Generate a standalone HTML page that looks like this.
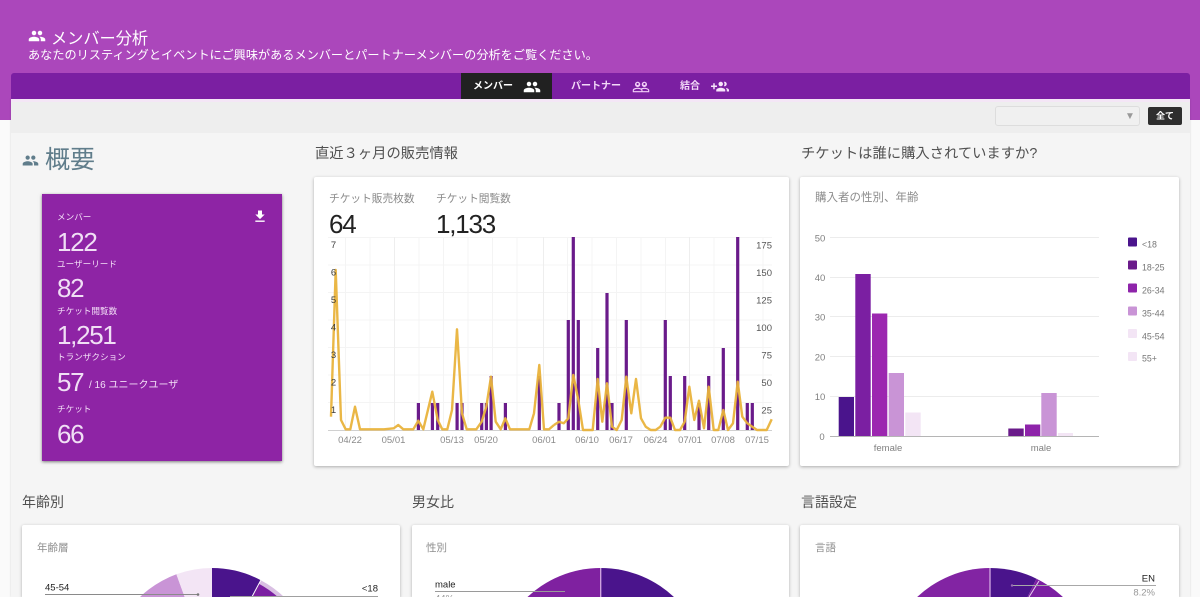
<!DOCTYPE html>
<html lang="ja"><head><meta charset="utf-8"><title>メンバー分析</title>
<style>
html,body{margin:0;padding:0;width:1200px;height:597px;overflow:hidden}
body{background:#fafafa;font-family:"Liberation Sans","Noto Sans CJK JP",sans-serif}
#w{position:relative;width:1200px;height:597px;overflow:hidden}
.a{position:absolute;white-space:nowrap;line-height:1}
.box{position:absolute;background:#fff;box-shadow:0 1px 3px rgba(0,0,0,.3);border-radius:2px}
.h{font-size:14.3px;color:#505050}
.ct{font-size:11.5px;color:#8d8d8d}
.l{font-size:8.6px;color:#f3dff7}
.n{font-size:26px;letter-spacing:-1.3px;color:#f0dff5}
svg{position:absolute;overflow:hidden}
</style></head><body><div id="w">
<div class="a" style="left:0;top:0;width:1200px;height:120px;background:#ab47bb"></div>
<div class="a" style="left:11px;top:99px;width:1179px;height:498px;background:#f5f5f5;box-shadow:0 0 2px rgba(0,0,0,.15)"></div>
<div class="a" style="left:11px;top:99px;width:1179px;height:34px;background:#eeeeee;border-top:3px solid #f4e6f6;box-sizing:border-box"></div>
<div class="a" style="left:11px;top:73px;width:1179px;height:26px;background:#7b1fa2;border-radius:3px 3px 0 0"></div>
<div class="a" style="left:461px;top:73px;width:91px;height:26px;background:#212121"></div>

<svg style="left:28px;top:27px" width="18" height="18" viewBox="0 0 24 24" fill="#fff"><path d="M16 11c1.66 0 2.99-1.34 2.99-3S17.66 5 16 5c-1.66 0-3 1.34-3 3s1.34 3 3 3zm-8 0c1.66 0 2.99-1.34 2.99-3S9.66 5 8 5C6.34 5 5 6.34 5 8s1.34 3 3 3zm0 2c-2.33 0-7 1.17-7 3.5V19h14v-2.5c0-2.33-4.67-3.5-7-3.5zm8 0c-.29 0-.62.02-.97.05 1.16.84 1.97 1.97 1.97 3.45V19h6v-2.5c0-2.33-4.67-3.5-7-3.5z"/></svg>
<div class="a" style="left:51px;top:31px;font-size:16.2px;color:#fff">メンバー分析</div>
<div class="a" style="left:28px;top:49px;font-size:12.16px;color:#fff">あなたのリスティングとイベントにご興味があるメンバーとパートナーメンバーの分析をご覧ください。</div>

<div class="a" style="left:473px;top:82px;font-size:10px;font-weight:bold;color:#fff">メンバー</div>
<svg style="left:523px;top:78px" width="18" height="18" viewBox="0 0 24 24" fill="#fff"><path d="M16 11c1.66 0 2.99-1.34 2.99-3S17.66 5 16 5c-1.66 0-3 1.34-3 3s1.34 3 3 3zm-8 0c1.66 0 2.99-1.34 2.99-3S9.66 5 8 5C6.34 5 5 6.34 5 8s1.34 3 3 3zm0 2c-2.33 0-7 1.17-7 3.5V19h14v-2.5c0-2.33-4.67-3.5-7-3.5zm8 0c-.29 0-.62.02-.97.05 1.16.84 1.97 1.97 1.97 3.45V19h6v-2.5c0-2.33-4.67-3.5-7-3.5z"/></svg>
<div class="a" style="left:571px;top:82px;font-size:10px;font-weight:bold;color:#f3d9f8">パートナー</div>
<svg style="left:632px;top:78px" width="18" height="18" viewBox="0 0 24 24" fill="#f3d0f8"><path d="M16.5 13c-1.2 0-3.07.34-4.5 1-1.43-.67-3.3-1-4.5-1C5.33 13 1 14.08 1 16.25V19h22v-2.75c0-2.17-4.33-3.25-6.5-3.25zm-4 4.5h-10v-1.25c0-.54 2.56-1.75 5-1.75s5 1.21 5 1.75v1.25zm9 0H14v-1.25c0-.46-.2-.86-.52-1.22.88-.3 1.96-.53 3.02-.53 2.44 0 5 1.21 5 1.75v1.25zM7.5 12c1.93 0 3.5-1.57 3.5-3.5S9.43 5 7.5 5 4 6.57 4 8.5 5.57 12 7.5 12zm0-5.5c.83 0 1.5.67 1.5 1.5s-.67 1.5-1.5 1.5S6 8.83 6 8s.67-1.5 1.5-1.5zm9 5.5c1.93 0 3.5-1.57 3.5-3.5S18.43 5 16.5 5 13 6.57 13 8.5s1.57 3.5 3.5 3.5zm0-5.5c.83 0 1.5.67 1.5 1.5s-.67 1.5-1.5 1.5S15 8.83 15 8s.67-1.5 1.5-1.5z"/></svg>
<div class="a" style="left:680px;top:82px;font-size:10px;font-weight:bold;color:#f3d9f8">結合</div>
<svg style="left:711px;top:78px" width="18" height="18" viewBox="0 0 24 24" fill="#f6e3fa"><path d="M8 10H5V7H3v3H0v2h3v3h2v-3h3v-2zm10 1c1.66 0 2.99-1.34 2.99-3S19.66 5 18 5c-.32 0-.63.05-.91.14.57.81.9 1.79.9 2.86s-.34 2.04-.9 2.86c.28.09.59.14.91.14zm-5 0c1.66 0 2.99-1.34 2.99-3S14.66 5 13 5c-1.66 0-3 1.34-3 3s1.34 3 3 3zm6.62 2.16c.83.73 1.38 1.66 1.38 2.84v2h3v-2c0-1.54-2.37-2.49-4.38-2.84zM13 13c-2 0-6 1-6 3v2h12v-2c0-2-4-3-6-3z"/></svg>

<div class="a" style="left:995px;top:106px;width:145px;height:20px;box-sizing:border-box;background:#f0f0f0;border:1px solid #ddd;border-radius:3px"></div>
<div class="a" style="left:1125px;top:111px;font-size:10px;line-height:11px;color:#999">▼</div>
<div class="a" style="left:1148px;top:107px;width:34px;height:18px;background:#2e2e2e;border-radius:2px;color:#fff;font-size:9px;font-weight:bold;text-align:center;line-height:18px">全て</div>

<svg style="left:22px;top:152px" width="17" height="17" viewBox="0 0 24 24" fill="#607d8b"><path d="M16 11c1.66 0 2.99-1.34 2.99-3S17.66 5 16 5c-1.66 0-3 1.34-3 3s1.34 3 3 3zm-8 0c1.66 0 2.99-1.34 2.99-3S9.66 5 8 5C6.34 5 5 6.34 5 8s1.34 3 3 3zm0 2c-2.33 0-7 1.17-7 3.5V19h14v-2.5c0-2.33-4.67-3.5-7-3.5zm8 0c-.29 0-.62.02-.97.05 1.16.84 1.97 1.97 1.97 3.45V19h6v-2.5c0-2.33-4.67-3.5-7-3.5z"/></svg>
<div class="a" style="left:45px;top:148px;font-size:25px;color:#607d8b">概要</div>

<div class="a" style="left:42px;top:194px;width:240px;height:267px;background:#8e24a5;box-shadow:0 1px 3px rgba(0,0,0,.5)"></div>
<svg style="left:252px;top:208px" width="16" height="17" viewBox="0 0 24 24" fill="#fff"><path d="M19 9h-4V3H9v6H5l7 7 7-7zM5 18v2h14v-2H5z"/></svg>
<div class="a l" style="left:57px;top:213px">メンバー</div>
<div class="a n" style="left:57px;top:229px">122</div>
<div class="a l" style="left:57px;top:260px">ユーザーリード</div>
<div class="a n" style="left:57px;top:275px">82</div>
<div class="a l" style="left:57px;top:307px">チケット閲覧数</div>
<div class="a n" style="left:57px;top:322px">1,251</div>
<div class="a l" style="left:57px;top:353px">トランザクション</div>
<div class="a n" style="left:57px;top:369px">57</div>
<div class="a" style="left:89px;top:381px;font-size:10px;color:#f3dff7">/ 16 ユニークユーザ</div>
<div class="a l" style="left:57px;top:405px">チケット</div>
<div class="a n" style="left:57px;top:421px">66</div>

<div class="a h" style="left:315px;top:147px">直近３ヶ月の販売情報</div>
<div class="a h" style="left:801px;top:147px">チケットは誰に購入されていますか?</div>
<div class="box" style="left:314px;top:177px;width:475px;height:289px"></div>
<div class="box" style="left:800px;top:177px;width:379px;height:289px"></div>
<div class="a" style="left:329px;top:194px;font-size:10.7px;color:#8a8a8a">チケット販売枚数</div>
<div class="a" style="left:436px;top:194px;font-size:10.7px;color:#8a8a8a">チケット閲覧数</div>
<div class="a" style="left:329px;top:211px;font-size:26px;letter-spacing:-1.2px;color:#222">64</div>
<div class="a" style="left:436px;top:211px;font-size:26px;letter-spacing:-1.2px;color:#222">1,133</div>

<svg style="left:0;top:0" width="1200" height="597">
<g stroke="#f4f4f4" stroke-width="1">
<path d="M328 237.5H772M328 265H772M328 292.5H772M328 320H772M328 347.5H772M328 375H772M328 402.5H772"/>
<path d="M345.5 237V430M370 237V430M419 237V430M443.5 237V430M468 237V430M492.5 237V430M517 237V430M567.5 237V430M592 237V430M616.5 237V430M641 237V430M665.5 237V430M714 237V430M738.5 237V430M763 237V430"/>
</g>
<path d="M394.5 237V430M543.5 237V430M689.5 237V430" stroke="#eeeeee"/>
<path d="M328 430.5H772" stroke="#d0d0d0"/>
<g fill="#6a1b8a">
<rect x="416.800" y="403" width="3.200" height="27"/><rect x="430.800" y="403" width="3.200" height="27"/><rect x="436.100" y="403" width="3.200" height="27"/><rect x="455.500" y="403" width="3.200" height="27"/><rect x="460.400" y="403" width="3.200" height="27"/><rect x="480.100" y="403" width="3.200" height="27"/><rect x="484.800" y="403" width="3.200" height="27"/><rect x="489.500" y="376" width="3.200" height="54"/><rect x="503.800" y="403" width="3.200" height="27"/><rect x="537.700" y="376" width="3.200" height="54"/>
<rect x="557.400" y="403" width="3.200" height="27"/><rect x="566.700" y="320" width="3.200" height="110"/><rect x="571.700" y="237" width="3.200" height="193"/><rect x="576.700" y="320" width="3.200" height="110"/><rect x="596.100" y="348" width="3.200" height="82"/><rect x="605.400" y="293" width="3.200" height="137"/><rect x="610.400" y="403" width="3.200" height="27"/><rect x="624.700" y="320" width="3.200" height="110"/><rect x="663.700" y="320" width="3.200" height="110"/><rect x="668.700" y="376" width="3.200" height="54"/><rect x="683.100" y="376" width="3.200" height="54"/><rect x="697.400" y="403" width="3.200" height="27"/><rect x="707.100" y="376" width="3.200" height="54"/><rect x="721.700" y="348" width="3.200" height="82"/><rect x="736.100" y="237" width="3.200" height="193"/><rect x="745.700" y="403" width="3.200" height="27"/><rect x="750.700" y="403" width="3.200" height="27"/>
</g>
<g fill="none" stroke="#e9b33c" stroke-width="2.4" stroke-linejoin="round" opacity=".95">
<polyline points="331,416.700 335.700,270 341,420 345.700,429.300 350.300,429.300 355,406.700 360,429.300 384,429.300 393.700,428.300 398.300,425 403.300,429.300 413.300,429.300 418.300,420.700 423.300,429.300 432.300,391.700 437.700,420 442.300,429.300 447.300,429.300 452,410 457,329.300 462,413.300 466.700,429.300 476.300,429.300 481.700,421.700 486.300,406.700 491,376.700 495.700,421.700 500.700,429.300 505.300,418.300 510,429.300 529.300,429.300 534,413.300 539.300,365 544,429.300 549,429.300 554,425"/>
<polyline points="554,425 559,421.700 563.700,423.300 568.300,418.300 573.300,375 578.300,400 583,430 592.700,430 597.700,379 602.300,421.700 607,383.300 612,426.700 616.700,430 621.700,420 626.300,376.700 631.300,413.300 636,379 641,418.300 645.700,426.700 650.700,430 655.700,430 660.300,426.700 665.300,417.700 670.300,417.700 675,430 680,430 684.700,421.700 689.300,386.700 694.300,420 699,400.700 704,428.300 708.700,386.700 713.700,430 718.300,430 723.300,410 728,430 733,423.300 737.700,381.700 742.300,416.700 747.300,423.300 752.300,426.700 757,430 766.700,430 771.700,419.300"/>
</g>
<g font-family="Liberation Sans,sans-serif" font-size="9.5" fill="#3c3c3c" text-anchor="middle">
<text x="333.5" y="248">7</text><text x="333.5" y="275.5">6</text><text x="333.5" y="303">5</text><text x="333.5" y="330.5">4</text><text x="333.5" y="358">3</text><text x="333.5" y="385.5">2</text><text x="333.5" y="413">1</text>
</g>
<g font-family="Liberation Sans,sans-serif" font-size="9.5" fill="#555" text-anchor="end">
<text x="772" y="248.5">175</text><text x="772" y="276">150</text><text x="772" y="303.5">125</text><text x="772" y="331">100</text><text x="772" y="358.5">75</text><text x="772" y="386">50</text><text x="772" y="413.5">25</text>
</g>
<g font-family="Liberation Sans,sans-serif" font-size="9.5" fill="#8a8a8a" text-anchor="middle">
<text x="350" y="443">04/22</text><text x="393.5" y="443">05/01</text><text x="452" y="443">05/13</text><text x="486" y="443">05/20</text><text x="544" y="443">06/01</text><text x="587" y="443">06/10</text><text x="621" y="443">06/17</text><text x="655.5" y="443">06/24</text><text x="690" y="443">07/01</text><text x="723" y="443">07/08</text><text x="757" y="443">07/15</text>
</g>

<path d="M830 237.5H1099M830 277.5H1099M830 316.5H1099M830 356.5H1099M830 396.5H1099" stroke="#ececec"/>
<path d="M830 436.5H1099" stroke="#b5b5b5"/>
<rect x="838.700" y="397" width="15.300" height="39" fill="#4a148c"/>
<rect x="855.300" y="274" width="15.400" height="162" fill="#7b1fa2"/>
<rect x="872" y="313.500" width="15.300" height="122.500" fill="#9c27b0"/>
<rect x="888.700" y="373" width="15.300" height="63" fill="#c994d6"/>
<rect x="905.300" y="412.500" width="15.400" height="23.500" fill="#f3e5f5"/>
<rect x="1008.300" y="428.500" width="15.400" height="7.500" fill="#6a1b8a"/>
<rect x="1025" y="424.500" width="15.300" height="11.500" fill="#8e24aa"/>
<rect x="1041.300" y="393" width="15.400" height="43" fill="#c994d6"/>
<rect x="1058" y="433" width="15" height="3" fill="#f3e5f5"/>
<g font-family="Liberation Sans,sans-serif" font-size="9.5" fill="#808080">
<text x="820" y="241.5" text-anchor="middle">50</text><text x="820" y="281" text-anchor="middle">40</text><text x="820" y="320.5" text-anchor="middle">30</text><text x="820" y="360.5" text-anchor="middle">20</text><text x="820" y="400" text-anchor="middle">10</text><text x="822" y="440" text-anchor="middle">0</text>
<text x="888" y="451" text-anchor="middle">female</text><text x="1041" y="451" text-anchor="middle">male</text>
</g>
<rect x="1128" y="237.5" width="9" height="9" rx="1" fill="#4a148c"/><rect x="1128" y="260.5" width="9" height="9" rx="1" fill="#6a1b8a"/><rect x="1128" y="283.5" width="9" height="9" rx="1" fill="#8e24aa"/><rect x="1128" y="306.5" width="9" height="9" rx="1" fill="#c994d6"/><rect x="1128" y="329" width="9" height="9" rx="1" fill="#f3e5f5"/><rect x="1128" y="352" width="9" height="9" rx="1" fill="#f3e5f5"/>
<g font-family="Liberation Sans,sans-serif" font-size="8.8" fill="#777">
<text x="1142" y="247.5">&lt;18</text><text x="1142" y="270.5">18-25</text><text x="1142" y="293.5">26-34</text><text x="1142" y="316.5">35-44</text><text x="1142" y="339.5">45-54</text><text x="1142" y="361.5">55+</text>
</g>
</svg>

<div class="a ct" style="left:815px;top:193px">購入者の性別、年齢</div>

<div class="a h" style="left:22px;top:495px;font-size:14px">年齢別</div>
<div class="a h" style="left:412px;top:495px;font-size:14px">男女比</div>
<div class="a h" style="left:801px;top:495px;font-size:14px">言語設定</div>
<div class="box" style="left:22px;top:525px;width:378px;height:72px;border-radius:2px 2px 0 0"></div>
<div class="box" style="left:412px;top:525px;width:377px;height:72px;border-radius:2px 2px 0 0"></div>
<div class="box" style="left:800px;top:525px;width:379px;height:72px;border-radius:2px 2px 0 0"></div>
<div class="a ct" style="left:37px;top:543px;font-size:10.5px">年齢層</div>
<div class="a ct" style="left:426px;top:543px;font-size:10.5px">性別</div>
<div class="a ct" style="left:815px;top:543px;font-size:10.5px">言語</div>

<svg style="left:0;top:0" width="1200" height="597">
<path d="M212 672L108 672A104 104 0 0 1 176.4 574.3Z" fill="#c994d6"/>
<path d="M212 672L176.4 574.3A104 104 0 0 1 212 568Z" fill="#f3e5f5"/>
<path d="M212 672L212 568A104 104 0 0 1 260.8 580.2Z" fill="#4a148c"/>
<path d="M212 672L260.8 580.2A104 104 0 0 1 312.5 645Z" fill="#d9bfe3"/>
<path d="M212 672L258.9 583.7A100 100 0 0 1 298 622Z" fill="#7b1fa2"/>
<path d="M212 672L260.8 580.2" stroke="#fff" stroke-width="1"/>
<path d="M45 594.5H198" stroke="#8a8a8a"/><circle cx="198" cy="594.5" r="1.3" fill="#777"/>
<path d="M230 596.5H378" stroke="#a0a0a0"/>
<path d="M600.7 675L600.7 568A107 107 0 0 0 493.7 675Z" fill="#7f21a0"/>
<path d="M600.7 675L600.7 568A107 107 0 0 1 707.7 675Z" fill="#4a148c"/>
<path d="M600.7 568V597" stroke="#d3a9e2" stroke-width="1.3"/>
<path d="M435 591.5H565" stroke="#9a9a9a"/>
<path d="M990 674L990 568A106 106 0 0 0 884 674Z" fill="#8224a3"/>
<path d="M990 674L990 568A106 106 0 0 1 1036.5 578.7Z" fill="#4a148c"/>
<path d="M990 674L1036.5 578.7A106 106 0 0 1 1096 674Z" fill="#7b1fa2"/>
<path d="M990 568V597" stroke="#d3a9e2" stroke-width="1.3"/>
<path d="M1039 581L1029 597" stroke="#e6cdee" stroke-width="1"/>
<path d="M1012 585.5H1156" stroke="#a8a8a8"/><circle cx="1012" cy="585.5" r="1.2" fill="#9b6fb5"/>
<g font-family="Liberation Sans,sans-serif" font-size="9.5" fill="#222">
<text x="45" y="590.5">45-54</text>
<text x="378" y="591.5" text-anchor="end">&lt;18</text>
<text x="435" y="587.5">male</text>
<text x="1155" y="581.5" text-anchor="end">EN</text>
</g>
<g font-family="Liberation Sans,sans-serif" font-size="9.5" fill="#999">
<text x="435" y="601.5">44%</text>
<text x="1155" y="595.5" text-anchor="end">8.2%</text>
</g>
</svg>
</div></body></html>
